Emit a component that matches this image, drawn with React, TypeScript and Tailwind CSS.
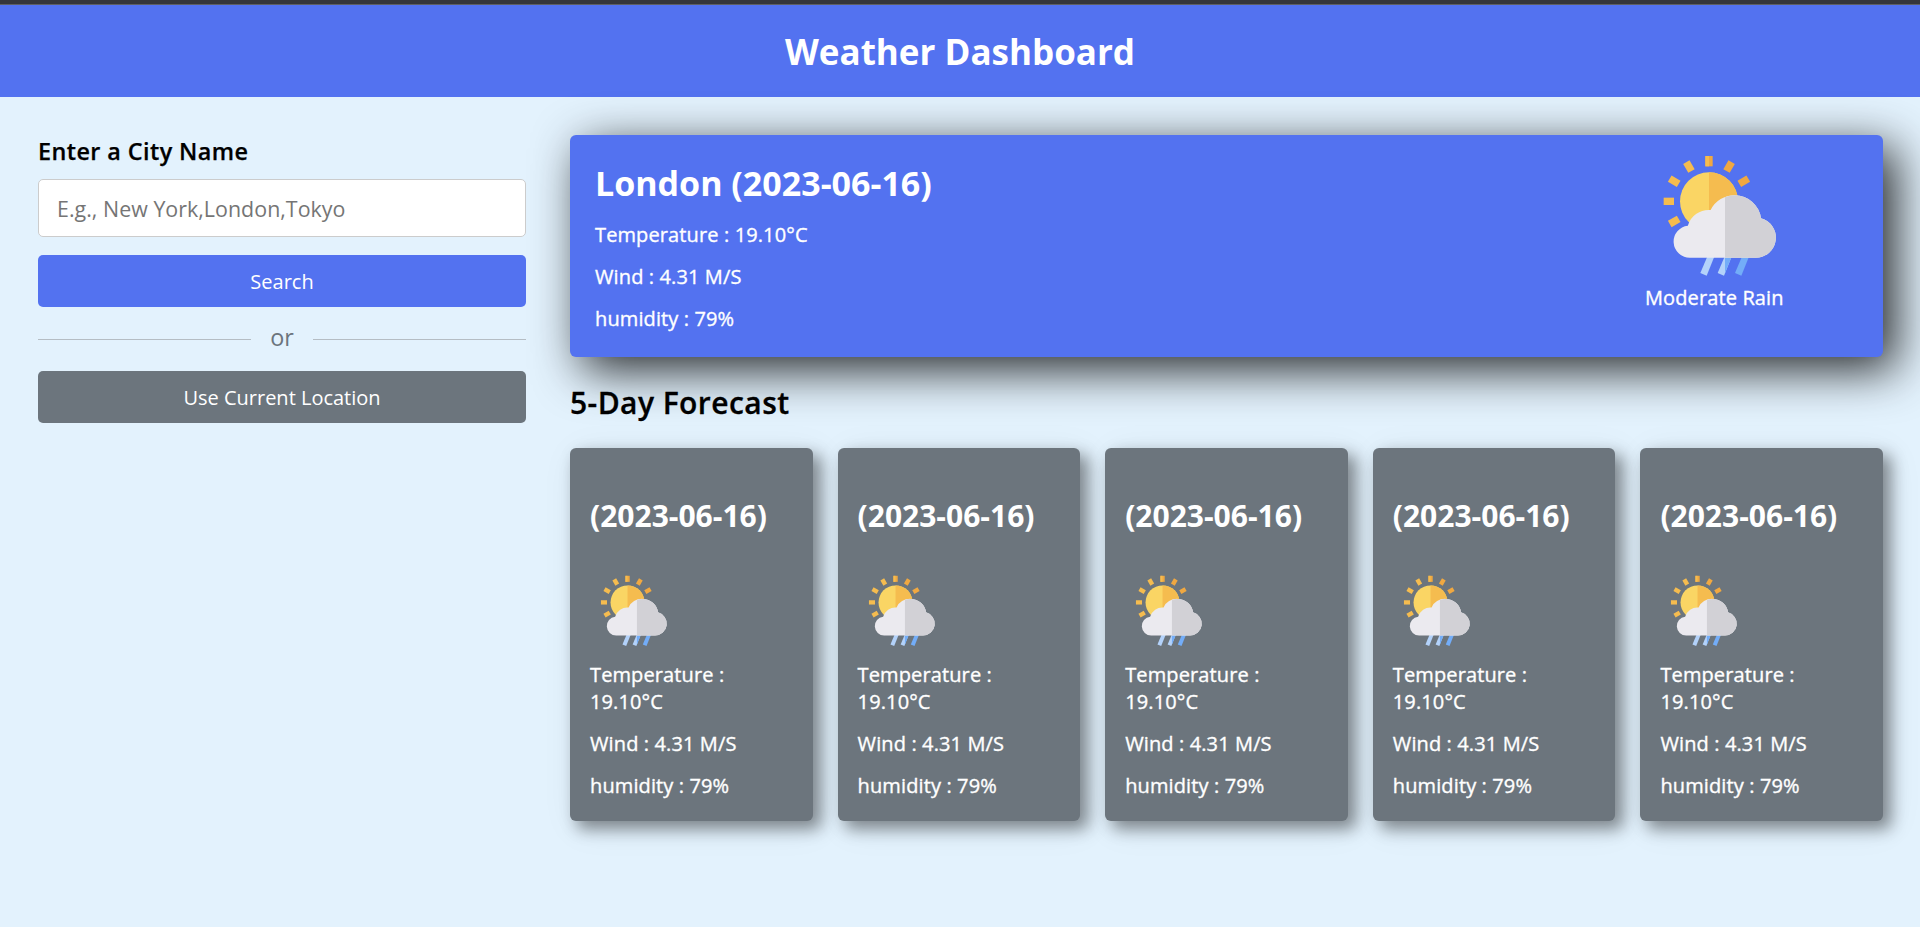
const days = ['(2023-06-16)', '(2023-06-16)', '(2023-06-16)', '(2023-06-16)', '(2023-06-16)'];

const rays = [
  { angle: 0, color: '#f0a841' },
  { angle: 30, color: '#f0a841' },
  { angle: 60, color: '#f0a841' },
  { angle: 240, color: '#f5bc4f' },
  { angle: 270, color: '#f5bc4f' },
  { angle: 300, color: '#f5bc4f' },
  { angle: 330, color: '#f5bc4f' },
];

const cloud =
  'M149 353 A48 48 0 0 1 143.5 257.3 A65 65 0 0 1 212 210 A79 79 0 0 1 285 166 A79 79 0 0 1 363 235 A60 60 0 0 1 348 353 Z';

function RainIcon({ className }: { className: string }) {
  return (
    <svg className={className} viewBox="15 3 450 450" aria-hidden="true">
      {rays.map((ray) => (
        <rect
          key={ray.angle}
          x="196"
          y="48"
          width="22"
          height="31"
          fill={ray.color}
          transform={`rotate(${ray.angle} 207 184)`}
        />
      ))}
      <rect x="196" y="48" width="11" height="31" fill="#f5bc4f" />
      <circle cx="207" cy="184" r="87" fill="#fad564" />
      <path d="M207 97 A87 87 0 0 1 207 271 Z" fill="#f5bc4f" />
      <path d="M203 347 L224 347 L200 407 L181 399 Z" fill="#b3d2fa" />
      <path d="M255 347 L276 347 L252 407 L233 399 Z" fill="#b3d2fa" />
      <path d="M255 347 L276 347 L255 399 Z" fill="#73adf8" />
      <path d="M307 347 L328 347 L304 407 L285 399 Z" fill="#73adf8" />
      <path d={cloud} fill="#ebeaef" />
      <path
        d="M255 353 L255 172 C265 168 275 166 285 166 A79 79 0 0 1 363 235 A60 60 0 0 1 348 353 Z"
        fill="#d2d1d6"
      />
    </svg>
  );
}

const reading = 'tracking-[0.12px] [-webkit-text-stroke:0.35px_white]';

function Readings() {
  return (
    <>
      <h6 className={`mt-[15px] ${reading}`}>Temperature : 19.10°C</h6>
      <h6 className={`mt-[15px] ${reading}`}>Wind : 4.31 M/S</h6>
      <h6 className={`mt-[15px] ${reading}`}>humidity : 79%</h6>
    </>
  );
}

export default function App() {
  return (
    <div className="flex min-h-screen flex-col bg-[#e3f2fd] font-['Open_Sans',sans-serif] text-xl/[27px] text-black">
      <div className="h-[5px] border-b border-[#5f6063] bg-[#35363a]" />
      <h1 className="flex h-[92px] items-center justify-center bg-[#5372f0] text-[35px] font-bold text-white">
        Weather Dashboard
      </h1>
      <main className="flex gap-11 pt-[38px] pr-[37px] pl-[38px]">
        <section className="w-[488px] shrink-0">
          <h3 className="text-[23.4px]/[32px] font-semibold tracking-[0.42px] [-webkit-text-stroke:0.25px_black]">
            Enter a City Name
          </h3>
          <input
            className="mt-3 block h-[58px] w-full rounded-[5px] border border-[#cccccc] bg-white px-[18px] text-[21.4px] tracking-[0.03px] outline-none placeholder:text-[#757575]"
            type="text"
            placeholder="E.g., New York,London,Tokyo"
          />
          <button className="mt-[18px] block h-[52px] w-full rounded-[5px] bg-[#5372f0] text-white">Search</button>
          <div className="flex h-16 items-center gap-[19px] text-[23.4px] text-[#6c757d]">
            <span className="h-px flex-1 bg-[#b5bdc4]" />
            <span className="pb-[3px]">or</span>
            <span className="h-px flex-1 bg-[#b5bdc4]" />
          </div>
          <button className="block h-[52px] w-full rounded-[5px] bg-[#6c757d] text-white">Use Current Location</button>
        </section>
        <section className="min-w-0 flex-1">
          <div className="flex h-[222px] justify-between rounded-md bg-[#5372f0] pt-[25px] pr-[88px] pl-[25px] font-medium text-white shadow-[12.5px_12.5px_47px_rgba(0,0,0,0.83)]">
            <div>
              <h2 className="text-[34px]/[46px] font-bold">London (2023-06-16)</h2>
              <Readings />
            </div>
            <div className="-mt-[19px] w-[150px]">
              <RainIcon className="block size-[150px]" />
              <h6 className={`-mt-[7px] ${reading}`}>Moderate Rain</h6>
            </div>
          </div>
          <h2 className="mt-[25px] text-[30px]/[41px] font-semibold tracking-[0.44px] [-webkit-text-stroke:0.3px_black]">
            5-Day Forecast
          </h2>
          <ul className="mt-[25px] grid grid-cols-5 gap-[25px]">
            {days.map((day, index) => (
              <li
                key={index}
                className="h-[373px] rounded-md bg-[#6c757d] px-5 pt-[47px] font-medium text-white shadow-[7.5px_7.5px_16px_rgba(0,0,0,0.42),6px_6px_36px_rgba(0,0,0,0.08)]"
              >
                <h3 className="text-[30px]/[41px] font-bold">{day}</h3>
                <RainIcon className="mt-[31px] -mb-[9px] block size-[88px]" />
                <Readings />
              </li>
            ))}
          </ul>
        </section>
      </main>
    </div>
  );
}
